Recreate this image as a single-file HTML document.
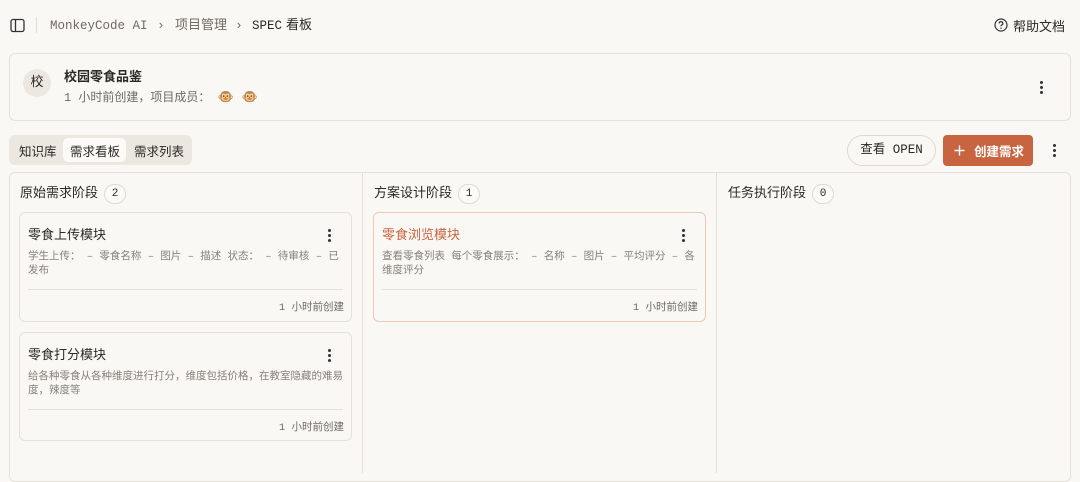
<!DOCTYPE html>
<html><head><meta charset="utf-8"><style>
*{box-sizing:border-box;margin:0;padding:0}
body{width:1080px;height:470px;overflow:hidden;background:#f9f8f4;font-family:"Liberation Mono","Noto Sans CJK SC",monospace;color:#2b2925;position:relative}
.a{position:absolute;white-space:nowrap}
.dots{position:absolute;width:3px}
.dots i{display:block;width:3px;height:3px;border-radius:50%;background:#333;margin-bottom:2px}
.card{position:absolute;background:#f9f8f4;border:1px solid #e4e1da;border-radius:6px}
.ct{position:absolute;left:8px;top:11px;font-size:13px}
.cd{position:absolute;left:8px;top:37px;right:8px;font-size:10.5px;color:#86827a;line-height:14px}
.hr{position:absolute;left:8px;right:8px;top:76px;border-top:1px solid #e4e1da}
.cf{position:absolute;right:7px;top:86px;font-size:10.5px;color:#6f6b63}
.badge{display:inline-block;border:1px solid #dedad2;border-radius:10px;width:22px;height:20px;text-align:center;font-size:11px;line-height:18px;margin-left:6px;vertical-align:middle;background:#fbfaf7}
.colh{position:absolute;top:182px;font-size:13px}
.bc span{display:inline-block}
</style></head><body>
<svg class="a" style="left:10px;top:18px" width="15" height="15" viewBox="0 0 15 15"><rect x="1" y="1.5" width="13" height="12" rx="2" fill="none" stroke="#333" stroke-width="1.3"/><line x1="5.5" y1="2" x2="5.5" y2="13" stroke="#333" stroke-width="1.3"/></svg>
<div class="a" style="left:36px;top:17px;width:1px;height:16px;background:#ddd"></div>
<div class="a bc" style="left:50px;top:16px;font-size:13px;line-height:20px;color:#6f6b63"><span style="font-size:12.5px;width:107px">MonkeyCode AI</span><span style="width:18px">›</span><span style="width:60px">项目管理</span><span style="width:17px">›</span><span style="color:#2b2925;font-size:12.5px;width:34px">SPEC</span><span style="color:#2b2925">看板</span></div>
<svg class="a" style="left:994px;top:18px" width="14" height="14" viewBox="0 0 14 14"><circle cx="7" cy="7" r="6" fill="none" stroke="#333" stroke-width="1.2"/><path d="M5.2 5.4a1.8 1.8 0 1 1 2.4 1.7c-.5.2-.6.6-.6 1.1" fill="none" stroke="#333" stroke-width="1.2"/><circle cx="7" cy="10.2" r=".7" fill="#333"/></svg>
<div class="a" style="left:1013px;top:16px;font-size:13px">帮助文档</div>

<div class="a" style="left:9px;top:53px;width:1062px;height:68px;border:1px solid #e4e1da;border-radius:6px"></div>
<div class="a" style="left:23px;top:69px;width:28px;height:28px;border-radius:50%;background:#ece8df;text-align:center;line-height:28px;font-size:13px">校</div>
<div class="a" style="left:64px;top:66px;font-size:13px;font-weight:bold">校园零食品鉴</div>
<div class="a" style="left:64px;top:88px;font-size:12px;color:#6f6b63;white-space:pre">1 小时前创建，项目成员： <span style="font-size:13px">🐵 🐵</span></div>
<div class="dots" style="left:1040px;top:81px"><i></i><i></i><i></i></div>

<div class="a" style="left:9px;top:135px;width:183px;height:30px;background:#ece8df;border-radius:6px"></div>
<div class="a" style="left:63px;top:138px;width:63px;height:24px;background:#fbfaf7;border-radius:5px"></div>
<div class="a" style="left:19px;top:141px;font-size:12.5px">知识库</div>
<div class="a" style="left:70px;top:141px;font-size:12.5px">需求看板</div>
<div class="a" style="left:134px;top:141px;font-size:12.5px">需求列表</div>

<div class="a" style="left:847px;top:135px;width:89px;height:31px;border:1px solid #dedad2;border-radius:16px;font-size:12.5px;text-align:center;line-height:29px">查看 OPEN</div>
<div class="a" style="left:943px;top:135px;width:90px;height:31px;background:#c8643f;border-radius:4px;color:#fff;font-size:12.5px;font-weight:bold">
<svg style="position:absolute;left:11px;top:10px" width="11" height="11" viewBox="0 0 11 11"><path d="M5.5 0.5v10M0.5 5.5h10" stroke="#fff" stroke-width="1.4"/></svg><span style="position:absolute;left:31px;top:6px">创建需求</span></div>
<div class="dots" style="left:1053px;top:144px"><i></i><i></i><i></i></div>

<div class="a" style="left:9px;top:172px;width:1062px;height:310px;border:1px solid #e4e1da;border-radius:6px"></div>
<div class="a" style="left:362px;top:173px;width:1px;height:300px;background:#e4e1da"></div>
<div class="a" style="left:716px;top:173px;width:1px;height:300px;background:#e4e1da"></div>
<div class="colh" style="left:20px">原始需求阶段<span class="badge">2</span></div>
<div class="colh" style="left:374px">方案设计阶段<span class="badge">1</span></div>
<div class="colh" style="left:728px">任务执行阶段<span class="badge">0</span></div>

<div class="card" style="left:19px;top:212px;width:333px;height:110px">
<div class="ct">零食上传模块</div><div class="dots" style="right:20px;top:16px"><i></i><i></i><i></i></div>
<div class="cd">学生上传： – 零食名称 – 图片 – 描述 状态： – 待审核 – 已发布</div>
<div class="hr"></div><div class="cf">1 小时前创建</div></div>

<div class="card" style="left:19px;top:332px;width:333px;height:109px">
<div class="ct">零食打分模块</div><div class="dots" style="right:20px;top:16px"><i></i><i></i><i></i></div>
<div class="cd">给各种零食从各种维度进行打分，维度包括价格，在教室隐藏的难易度，辣度等</div>
<div class="hr"></div><div class="cf">1 小时前创建</div></div>

<div class="card" style="left:373px;top:212px;width:333px;height:110px;border-color:#ecc8b8">
<div class="ct" style="color:#c8643f">零食浏览模块</div><div class="dots" style="right:20px;top:16px"><i></i><i></i><i></i></div>
<div class="cd">查看零食列表 每个零食展示： – 名称 – 图片 – 平均评分 – 各维度评分</div>
<div class="hr"></div><div class="cf">1 小时前创建</div></div>
</body></html>
